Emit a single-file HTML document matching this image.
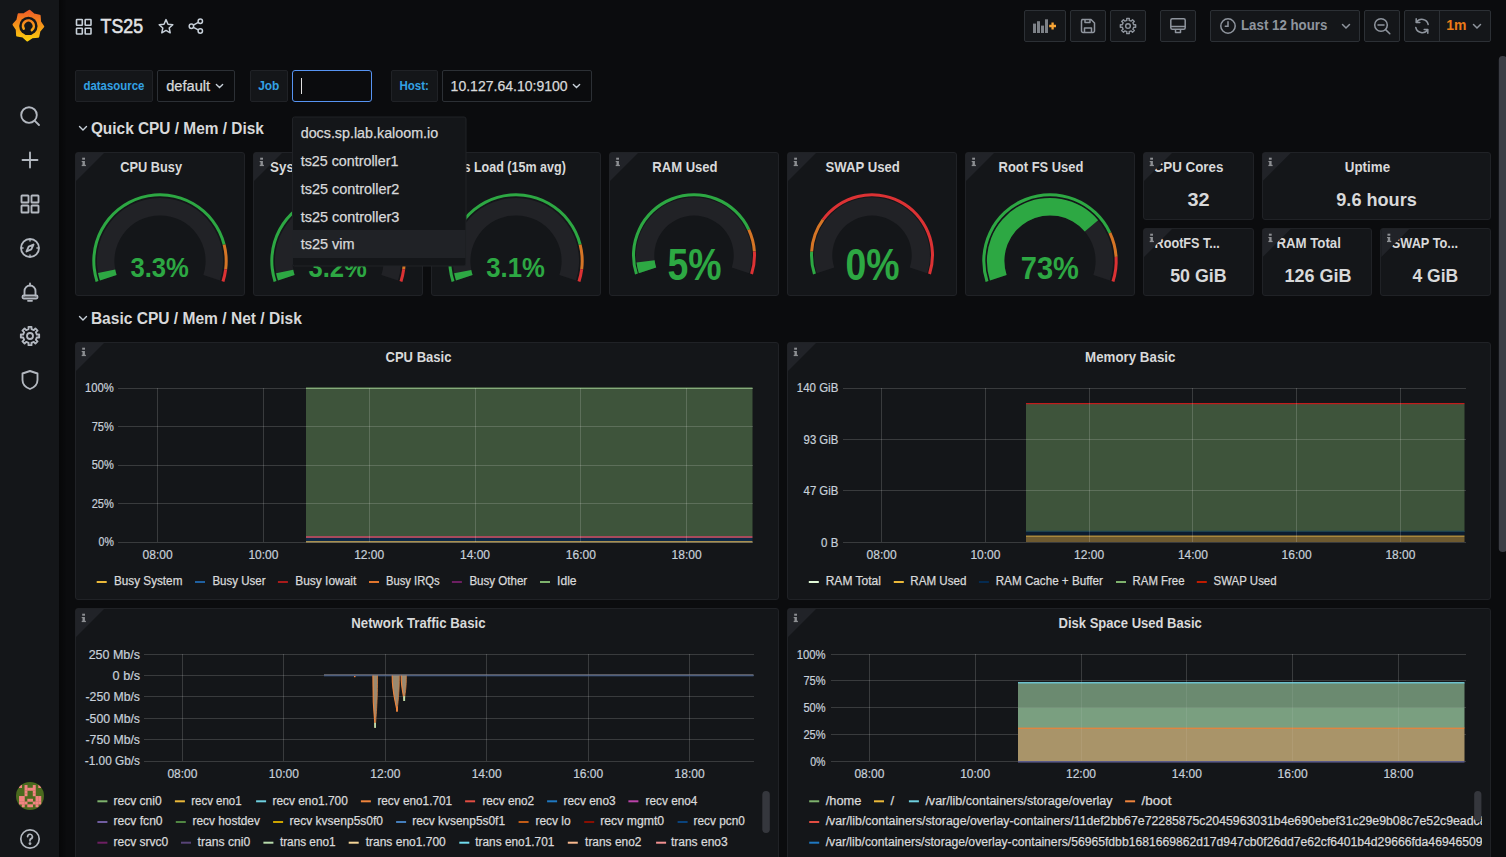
<!DOCTYPE html><html><head><meta charset="utf-8"><style>
*{margin:0;padding:0;box-sizing:border-box}
html,body{width:1506px;height:857px;overflow:hidden;background:#0b0c0e;font-family:"Liberation Sans", sans-serif;color:#d8d9da}
.a{position:absolute}
.panel{position:absolute;background:#141619;border:1px solid #202226;border-radius:3px}
.btn{position:absolute;top:10px;height:32px;background:#141619;border:1px solid #2c3035;border-radius:2px}
</style></head><body>
<div class="a" style="left:0;top:0;width:59px;height:857px;background:#141619"></div><div class="a" style="left:59px;top:0;width:8px;height:857px;background:linear-gradient(90deg,rgba(0,0,0,0.45),rgba(0,0,0,0))"></div><svg class="a" style="left:0;top:0" width="59" height="50" viewBox="0 0 59 50"><defs><linearGradient id="lg" gradientUnits="userSpaceOnUse" x1="0" y1="41" x2="0" y2="10"><stop offset="0" stop-color="#fcd10c"/><stop offset="1" stop-color="#f05a28"/></linearGradient></defs><path d="M29.43 10.84 L33.84 14.68 L39.57 15.89 L39.97 21.73 L43.16 26.63 L39.32 31.04 L38.11 36.77 L32.27 37.17 L27.37 40.36 L22.96 36.52 L17.23 35.31 L16.83 29.47 L13.64 24.57 L17.48 20.16 L18.69 14.43 L24.53 14.03 Z" fill="url(#lg)" stroke="url(#lg)" stroke-width="2.2" stroke-linejoin="round"/><circle cx="28.4" cy="25.900000000000002" r="9.2" fill="#141619"/><path d="M23.72 28.60 A5.4 5.4 0 1 1 31.87 30.04" fill="none" stroke="url(#lg)" stroke-width="2.6" stroke-linecap="round"/></svg><svg class="a" style="left:18px;top:104px" width="24" height="24" viewBox="0 0 24 24" fill="none" stroke="#b3b8c0" stroke-width="1.85" stroke-linecap="round" stroke-linejoin="round"><circle cx="11" cy="11" r="7.8"/><path d="M16.8 16.8 L21 21"/></svg><svg class="a" style="left:18px;top:148px" width="24" height="24" viewBox="0 0 24 24" fill="none" stroke="#b3b8c0" stroke-width="1.85" stroke-linecap="round" stroke-linejoin="round"><path d="M12 4.5 V19.5 M4.5 12 H19.5"/></svg><svg class="a" style="left:18px;top:192px" width="24" height="24" viewBox="0 0 24 24" fill="none" stroke="#b3b8c0" stroke-width="1.85" stroke-linecap="round" stroke-linejoin="round"><rect x="3.5" y="3.5" width="7" height="7" rx="0.6"/><rect x="13.5" y="3.5" width="7" height="7" rx="0.6"/><rect x="3.5" y="13.5" width="7" height="7" rx="0.6"/><rect x="13.5" y="13.5" width="7" height="7" rx="0.6"/></svg><svg class="a" style="left:18px;top:236px" width="24" height="24" viewBox="0 0 24 24" fill="none" stroke="#b3b8c0" stroke-width="1.85" stroke-linecap="round" stroke-linejoin="round"><circle cx="12" cy="12" r="9"/><path d="M15.5 8.5 L13.3 13.3 L8.5 15.5 L10.7 10.7 Z"/><path d="M12 3.5 v1.6 M12 18.9 v1.6 M3.5 12 h1.6 M18.9 12 h1.6" stroke-width="1.4"/></svg><svg class="a" style="left:18px;top:280px" width="24" height="24" viewBox="0 0 24 24" fill="none" stroke="#b3b8c0" stroke-width="1.85" stroke-linecap="round" stroke-linejoin="round"><path d="M6.5 15.5 V11 a5.5 5.5 0 0 1 11 0 V15.5"/><rect x="4.5" y="15.5" width="15" height="3" rx="1.2"/><path d="M10 20.8 h4"/><path d="M12 3.5 v2"/></svg><svg class="a" style="left:18px;top:324px" width="24" height="24" viewBox="0 0 24 24" fill="none" stroke="#b3b8c0" stroke-width="1.85" stroke-linecap="round" stroke-linejoin="round"><circle cx="12" cy="12" r="3"/><path d="M10.57 5.15 L10.47 2.83 L13.53 2.83 L13.43 5.15 L15.83 6.14 L17.41 4.43 L19.57 6.59 L17.86 8.17 L18.85 10.57 L21.17 10.47 L21.17 13.53 L18.85 13.43 L17.86 15.83 L19.57 17.41 L17.41 19.57 L15.83 17.86 L13.43 18.85 L13.53 21.17 L10.47 21.17 L10.57 18.85 L8.17 17.86 L6.59 19.57 L4.43 17.41 L6.14 15.83 L5.15 13.43 L2.83 13.53 L2.83 10.47 L5.15 10.57 L6.14 8.17 L4.43 6.59 L6.59 4.43 L8.17 6.14 Z"/></svg><svg class="a" style="left:18px;top:368px" width="24" height="24" viewBox="0 0 24 24" fill="none" stroke="#b3b8c0" stroke-width="1.85" stroke-linecap="round" stroke-linejoin="round"><path d="M12 3 L19.5 5.5 V12 C19.5 16.5 16 19.5 12 21 C8 19.5 4.5 16.5 4.5 12 V5.5 Z"/></svg><svg class="a" style="left:16px;top:782px" width="28" height="28" viewBox="0 0 28 28"><defs><clipPath id="avc"><circle cx="14" cy="14" r="14"/></clipPath></defs><g clip-path="url(#avc)"><rect width="28" height="28" fill="#4a6a1e"/><rect x="3.04" y="3.04" width="2.95" height="2.95" fill="#f28482"/><rect x="8.54" y="3.04" width="2.95" height="2.95" fill="#f28482"/><rect x="16.79" y="3.04" width="2.95" height="2.95" fill="#f28482"/><rect x="22.29" y="3.04" width="2.95" height="2.95" fill="#f28482"/><rect x="8.54" y="5.79" width="2.95" height="2.95" fill="#f28482"/><rect x="11.29" y="5.79" width="2.95" height="2.95" fill="#f28482"/><rect x="14.04" y="5.79" width="2.95" height="2.95" fill="#f28482"/><rect x="16.79" y="5.79" width="2.95" height="2.95" fill="#f28482"/><rect x="8.54" y="8.54" width="2.95" height="2.95" fill="#f28482"/><rect x="16.79" y="8.54" width="2.95" height="2.95" fill="#f28482"/><rect x="8.54" y="11.29" width="2.95" height="2.95" fill="#f28482"/><rect x="16.79" y="11.29" width="2.95" height="2.95" fill="#f28482"/><rect x="3.04" y="14.04" width="2.95" height="2.95" fill="#f28482"/><rect x="5.79" y="14.04" width="2.95" height="2.95" fill="#f28482"/><rect x="19.54" y="14.04" width="2.95" height="2.95" fill="#f28482"/><rect x="22.29" y="14.04" width="2.95" height="2.95" fill="#f28482"/><rect x="3.04" y="16.79" width="2.95" height="2.95" fill="#f28482"/><rect x="5.79" y="16.79" width="2.95" height="2.95" fill="#f28482"/><rect x="11.29" y="16.79" width="2.95" height="2.95" fill="#f28482"/><rect x="14.04" y="16.79" width="2.95" height="2.95" fill="#f28482"/><rect x="19.54" y="16.79" width="2.95" height="2.95" fill="#f28482"/><rect x="22.29" y="16.79" width="2.95" height="2.95" fill="#f28482"/><rect x="3.04" y="19.54" width="2.95" height="2.95" fill="#f28482"/><rect x="5.79" y="19.54" width="2.95" height="2.95" fill="#f28482"/><rect x="8.54" y="19.54" width="2.95" height="2.95" fill="#f28482"/><rect x="16.79" y="19.54" width="2.95" height="2.95" fill="#f28482"/><rect x="19.54" y="19.54" width="2.95" height="2.95" fill="#f28482"/><rect x="22.29" y="19.54" width="2.95" height="2.95" fill="#f28482"/><rect x="5.79" y="22.29" width="2.95" height="2.95" fill="#f28482"/><rect x="11.29" y="22.29" width="2.95" height="2.95" fill="#f28482"/><rect x="14.04" y="22.29" width="2.95" height="2.95" fill="#f28482"/><rect x="19.54" y="22.29" width="2.95" height="2.95" fill="#f28482"/></g></svg><svg class="a" style="left:19px;top:828px" width="22" height="22" viewBox="0 0 22 22" fill="none" stroke="#b3b8c0" stroke-width="1.7"><circle cx="11" cy="11" r="9.2"/><path d="M8.6 8.6 a2.4 2.4 0 1 1 3.2 2.3 c-0.6 0.2-0.8 0.6-0.8 1.3 v0.6" stroke-linecap="round"/><circle cx="11" cy="15.6" r="0.6" fill="#b3b8c0"/></svg><svg class="a" style="left:75px;top:18px" width="18" height="18" viewBox="0 0 18 18" fill="none" stroke="#c7d0d9" stroke-width="1.6"><rect x="1.5" y="1.5" width="5.8" height="5.8" rx="0.5"/><rect x="10.2" y="1.5" width="5.8" height="5.8" rx="0.5"/><rect x="1.5" y="10.2" width="5.8" height="5.8" rx="0.5"/><rect x="10.2" y="10.2" width="5.8" height="5.8" rx="0.5"/></svg><svg class="a" style="left:157px;top:18px" width="18" height="18" viewBox="0 0 18 18" fill="none" stroke="#c7d0d9" stroke-width="1.5" stroke-linejoin="round"><path d="M9 1.6 L11 6.2 L15.8 6.7 L12.2 10 L13.2 14.8 L9 12.4 L4.8 14.8 L5.8 10 L2.2 6.7 L7 6.2 Z"/></svg><svg class="a" style="left:187px;top:17px" width="18" height="18" viewBox="0 0 18 18" fill="none" stroke="#c7d0d9" stroke-width="1.5"><circle cx="13.3" cy="4.3" r="2.2"/><circle cx="4.4" cy="9.2" r="2.2"/><circle cx="13.3" cy="14" r="2.2"/><path d="M6.4 8.1 L11.3 5.4 M6.4 10.3 L11.3 12.9"/></svg><div class="btn" style="left:1024px;width:42px"></div><div class="btn" style="left:1070px;width:36px"></div><div class="btn" style="left:1110px;width:36px"></div><div class="btn" style="left:1160px;width:36px"></div><div class="btn" style="left:1210px;width:150px"></div><div class="btn" style="left:1364px;width:36px"></div><div class="btn" style="left:1404px;width:87px"></div><div class="a" style="left:1439px;top:10px;width:1px;height:32px;background:#2c3035"></div><svg class="a" style="left:1030px;top:16px" width="30" height="20" viewBox="0 0 30 20"><g fill="#7d8187"><rect x="3" y="7.6" width="3" height="9.4"/><rect x="7" y="5.2" width="3" height="11.8"/><rect x="11" y="9.6" width="3" height="7.4"/><rect x="15" y="3.3" width="3" height="13.7"/></g><path d="M22.6 6 V14 M18.6 10 H26.6" stroke="#141619" stroke-width="4.6"/><path d="M22.6 6.6 V13.4 M19.2 10 H26" stroke="#f7a536" stroke-width="2.3"/></svg><svg class="a" style="left:1079px;top:17px" width="18" height="18" viewBox="0 0 18 18" fill="none" stroke="#8f959e" stroke-width="1.5" stroke-linejoin="round"><path d="M3 2.5 H12 L15.5 6 V14 a1.5 1.5 0 0 1 -1.5 1.5 H4 a1.5 1.5 0 0 1 -1.5 -1.5 V4 a1.5 1.5 0 0 1 1.5 -1.5 Z"/><path d="M6 2.5 V5.5 H11 V2.5"/><path d="M5.5 15.5 V11 H12.5 V15.5"/></svg><svg class="a" style="left:1118px;top:16px" width="20" height="20" viewBox="0 0 24 24" fill="none" stroke="#8f959e" stroke-width="1.7" stroke-linejoin="round"><circle cx="12" cy="12" r="2.8"/><path d="M10.57 5.15 L10.47 2.83 L13.53 2.83 L13.43 5.15 L15.83 6.14 L17.41 4.43 L19.57 6.59 L17.86 8.17 L18.85 10.57 L21.17 10.47 L21.17 13.53 L18.85 13.43 L17.86 15.83 L19.57 17.41 L17.41 19.57 L15.83 17.86 L13.43 18.85 L13.53 21.17 L10.47 21.17 L10.57 18.85 L8.17 17.86 L6.59 19.57 L4.43 17.41 L6.14 15.83 L5.15 13.43 L2.83 13.53 L2.83 10.47 L5.15 10.57 L6.14 8.17 L4.43 6.59 L6.59 4.43 L8.17 6.14 Z"/></svg><svg class="a" style="left:1169px;top:17px" width="18" height="18" viewBox="0 0 18 18" fill="none" stroke="#8f959e" stroke-width="1.5" stroke-linejoin="round"><rect x="1.8" y="1.8" width="14.4" height="10.5" rx="1.5"/><path d="M1.8 9.5 H16.2"/><path d="M6.5 12.3 V15.5 H11.5 V12.3"/></svg><svg class="a" style="left:1219px;top:17px" width="18" height="18" viewBox="0 0 18 18" fill="none" stroke="#8f959e" stroke-width="1.5" stroke-linecap="round"><circle cx="9" cy="9" r="7.2"/><path d="M9 4.8 V9.3 H6.3"/></svg><svg class="a" style="left:1341px;top:23px" width="10" height="7.0" viewBox="0 0 10 7" fill="none" stroke="#8f959e" stroke-width="1.5" stroke-linecap="round"><path d="M1.5 1.5 L5 5 L8.5 1.5"/></svg><svg class="a" style="left:1373px;top:17px" width="19" height="19" viewBox="0 0 19 19" fill="none" stroke="#8f959e" stroke-width="1.5" stroke-linecap="round"><circle cx="8" cy="8" r="6.3"/><path d="M12.6 12.6 L16.8 16.8 M5 8 H11"/></svg><svg class="a" style="left:1413px;top:17px" width="18" height="18" viewBox="0 0 18 18" fill="none" stroke="#8f959e" stroke-width="1.5" stroke-linecap="round" stroke-linejoin="round"><path d="M15.2 7.5 A6.5 6.5 0 0 0 3.5 5.2 M2.8 10.5 A6.5 6.5 0 0 0 14.5 12.8"/><path d="M3.2 1.8 V5.5 H6.8 M14.8 16.2 V12.5 H11.2"/></svg><svg class="a" style="left:1472px;top:23px" width="10" height="7.0" viewBox="0 0 10 7" fill="none" stroke="#8f959e" stroke-width="1.5" stroke-linecap="round"><path d="M1.5 1.5 L5 5 L8.5 1.5"/></svg><div class="a" style="left:75px;top:70px;width:78px;height:32px;background:#141619;border:1px solid #202226;border-radius:2px"></div><div class="a" style="left:157px;top:70px;width:78px;height:32px;background:#0b0c0e;border:1px solid #2c3035;border-radius:2px"></div><svg class="a" style="left:215px;top:83px" width="9" height="6.5" viewBox="0 0 10 7" fill="none" stroke="#c7d0d9" stroke-width="1.5" stroke-linecap="round"><path d="M1.5 1.5 L5 5 L8.5 1.5"/></svg><div class="a" style="left:250px;top:70px;width:38px;height:32px;background:#141619;border:1px solid #202226;border-radius:2px"></div><div class="a" style="left:292px;top:70px;width:80px;height:32px;background:#0b0c0e;border:1px solid #5794f2;border-radius:3px"></div><div class="a" style="left:301px;top:78px;width:1px;height:16px;background:#e0e0e0"></div><div class="a" style="left:391px;top:70px;width:47px;height:32px;background:#141619;border:1px solid #202226;border-radius:2px"></div><div class="a" style="left:442px;top:70px;width:150px;height:32px;background:#0b0c0e;border:1px solid #2c3035;border-radius:2px"></div><svg class="a" style="left:572px;top:83px" width="9" height="6.5" viewBox="0 0 10 7" fill="none" stroke="#c7d0d9" stroke-width="1.5" stroke-linecap="round"><path d="M1.5 1.5 L5 5 L8.5 1.5"/></svg><svg class="a" style="left:78px;top:125.3px" width="10" height="7" viewBox="0 0 10 7" fill="none" stroke="#c7d0d9" stroke-width="1.4" stroke-linecap="round"><path d="M1.5 1.5 L5 5 L8.5 1.5"/></svg><svg class="a" style="left:78px;top:315.3px" width="10" height="7" viewBox="0 0 10 7" fill="none" stroke="#c7d0d9" stroke-width="1.4" stroke-linecap="round"><path d="M1.5 1.5 L5 5 L8.5 1.5"/></svg><div class="panel" style="left:75.0px;top:152px;width:170.0px;height:144px"></div><div class="panel" style="left:253.0px;top:152px;width:170.0px;height:144px"></div><div class="panel" style="left:431.0px;top:152px;width:170.0px;height:144px"></div><div class="panel" style="left:609.0px;top:152px;width:170.0px;height:144px"></div><div class="panel" style="left:787.0px;top:152px;width:170.0px;height:144px"></div><div class="panel" style="left:965.0px;top:152px;width:170.0px;height:144px"></div><div class="panel" style="left:1143.0px;top:152px;width:110.66666666666674px;height:68px"></div><div class="panel" style="left:1261.6666666666667px;top:152px;width:229.33333333333326px;height:68px"></div><div class="panel" style="left:1143.0px;top:228px;width:110.66666666666674px;height:68px"></div><div class="panel" style="left:1261.6666666666667px;top:228px;width:110.66666666666674px;height:68px"></div><div class="panel" style="left:1380.3333333333335px;top:228px;width:110.66666666666674px;height:68px"></div><div class="panel" style="left:75px;top:342px;width:704px;height:258px"></div><div class="panel" style="left:787px;top:342px;width:704px;height:258px"></div><div class="panel" style="left:75px;top:608px;width:704px;height:272px"></div><div class="panel" style="left:787px;top:608px;width:704px;height:272px"></div>
<svg class="a" style="left:0;top:0" width="1506" height="857" font-family="Liberation Sans, sans-serif"><text x="100.6" y="33.2" font-size="19.5" fill="#e2e4e6" stroke="#e2e4e6" stroke-width="0.55" textLength="42.4" lengthAdjust="spacingAndGlyphs">TS25</text><text x="1241.0" y="30.0" font-size="14" fill="#8f959e" font-weight="bold" textLength="86.4" lengthAdjust="spacingAndGlyphs">Last 12 hours</text><text x="1446.2" y="30.0" font-size="14" fill="#eb7b18" font-weight="bold" textLength="20.2" lengthAdjust="spacingAndGlyphs">1m</text><text x="83.5" y="90.3" font-size="12" fill="#33a2e5" font-weight="bold" textLength="60.9" lengthAdjust="spacingAndGlyphs">datasource</text><text x="166.2" y="90.5" font-size="14" fill="#d8d9da" stroke="#d8d9da" stroke-width="0.25" textLength="44.0" lengthAdjust="spacingAndGlyphs">default</text><text x="258.2" y="90.3" font-size="12" fill="#33a2e5" font-weight="bold" textLength="21.2" lengthAdjust="spacingAndGlyphs">Job</text><text x="399.5" y="90.3" font-size="12" fill="#33a2e5" font-weight="bold" textLength="29.4" lengthAdjust="spacingAndGlyphs">Host:</text><text x="450.6" y="90.5" font-size="14" fill="#d8d9da" stroke="#d8d9da" stroke-width="0.25" textLength="117.0" lengthAdjust="spacingAndGlyphs">10.127.64.10:9100</text><text x="90.9" y="133.8" font-size="16" fill="#d8d9da" font-weight="bold" textLength="172.9" lengthAdjust="spacingAndGlyphs">Quick CPU / Mem / Disk</text><text x="90.9" y="323.8" font-size="16" fill="#d8d9da" font-weight="bold" textLength="210.9" lengthAdjust="spacingAndGlyphs">Basic CPU / Mem / Net / Disk</text><text x="120.2" y="171.8" font-size="14" fill="#d8d9da" font-weight="bold" textLength="61.9" lengthAdjust="spacingAndGlyphs">CPU Busy</text><path d="M95.61 281.92 A67.7 67.7 0 1 1 225.57 244.16 L222.67 244.91 A64.7 64.7 0 1 0 98.47 280.99 Z" fill="#2da843"/><path d="M225.57 244.16 A67.7 67.7 0 0 1 227.17 269.49 L224.19 269.11 A64.7 64.7 0 0 0 222.67 244.91 Z" fill="#d57526"/><path d="M227.17 269.49 A67.7 67.7 0 0 1 224.39 281.92 L221.53 280.99 A64.7 64.7 0 0 0 224.19 269.11 Z" fill="#dc3234"/><path d="M99.99 280.50 A63.1 63.1 0 1 1 220.01 280.50 L203.37 275.09 A45.6 45.6 0 1 0 116.63 275.09 Z" fill="#212226"/><path d="M99.99 280.50 A63.1 63.1 0 0 1 98.03 272.90 L115.22 269.60 A45.6 45.6 0 0 0 116.63 275.09 Z" fill="#2da843"/><text x="130.4" y="276.5" font-size="27.5" fill="#2da843" textLength="58.4" lengthAdjust="spacingAndGlyphs" font-weight="bold">3.3%</text><text x="270.1" y="171.8" font-size="14" fill="#d8d9da" font-weight="bold" textLength="117.8" lengthAdjust="spacingAndGlyphs">Sys Load (5m avg)</text><path d="M273.61 281.92 A67.7 67.7 0 1 1 403.57 244.16 L400.67 244.91 A64.7 64.7 0 1 0 276.47 280.99 Z" fill="#2da843"/><path d="M403.57 244.16 A67.7 67.7 0 0 1 405.17 269.49 L402.19 269.11 A64.7 64.7 0 0 0 400.67 244.91 Z" fill="#d57526"/><path d="M405.17 269.49 A67.7 67.7 0 0 1 402.39 281.92 L399.53 280.99 A64.7 64.7 0 0 0 402.19 269.11 Z" fill="#dc3234"/><path d="M277.99 280.50 A63.1 63.1 0 1 1 398.01 280.50 L381.37 275.09 A45.6 45.6 0 1 0 294.63 275.09 Z" fill="#212226"/><path d="M277.99 280.50 A63.1 63.1 0 0 1 276.08 273.14 L293.25 269.77 A45.6 45.6 0 0 0 294.63 275.09 Z" fill="#2da843"/><text x="308.4" y="276.5" font-size="27.5" fill="#2da843" textLength="58.4" lengthAdjust="spacingAndGlyphs" font-weight="bold">3.2%</text><text x="448.1" y="171.8" font-size="14" fill="#d8d9da" font-weight="bold" textLength="117.8" lengthAdjust="spacingAndGlyphs">Sys Load (15m avg)</text><path d="M451.61 281.92 A67.7 67.7 0 1 1 581.57 244.16 L578.67 244.91 A64.7 64.7 0 1 0 454.47 280.99 Z" fill="#2da843"/><path d="M581.57 244.16 A67.7 67.7 0 0 1 583.17 269.49 L580.19 269.11 A64.7 64.7 0 0 0 578.67 244.91 Z" fill="#d57526"/><path d="M583.17 269.49 A67.7 67.7 0 0 1 580.39 281.92 L577.53 280.99 A64.7 64.7 0 0 0 580.19 269.11 Z" fill="#dc3234"/><path d="M455.99 280.50 A63.1 63.1 0 1 1 576.01 280.50 L559.37 275.09 A45.6 45.6 0 1 0 472.63 275.09 Z" fill="#212226"/><path d="M455.99 280.50 A63.1 63.1 0 0 1 454.12 273.37 L471.28 269.94 A45.6 45.6 0 0 0 472.63 275.09 Z" fill="#2da843"/><text x="486.3" y="276.5" font-size="27.5" fill="#2da843" textLength="58.6" lengthAdjust="spacingAndGlyphs" font-weight="bold">3.1%</text><text x="652.3" y="171.8" font-size="14" fill="#d8d9da" font-weight="bold" textLength="65.3" lengthAdjust="spacingAndGlyphs">RAM Used</text><path d="M635.03 274.46 A62 62 0 0 1 750.10 228.90 L747.38 230.18 A59 59 0 0 0 637.89 273.53 Z" fill="#2da843"/><path d="M750.10 228.90 A62 62 0 0 1 755.88 251.41 L752.88 251.60 A59 59 0 0 0 747.38 230.18 Z" fill="#d57526"/><path d="M755.88 251.41 A62 62 0 0 1 752.97 274.46 L750.11 273.53 A59 59 0 0 0 752.88 251.60 Z" fill="#dc3234"/><path d="M638.84 273.22 A58 58 0 1 1 749.16 273.22 L731.76 267.57 A39.7 39.7 0 1 0 656.24 267.57 Z" fill="#212226"/><path d="M638.84 273.22 A58 58 0 0 1 636.46 262.57 L654.61 260.28 A39.7 39.7 0 0 0 656.24 267.57 Z" fill="#2da843"/><text x="667.5" y="280.0" font-size="44" fill="#2da843" textLength="54.1" lengthAdjust="spacingAndGlyphs" font-weight="bold">5%</text><text x="825.5" y="171.8" font-size="14" fill="#d8d9da" font-weight="bold" textLength="74.3" lengthAdjust="spacingAndGlyphs">SWAP Used</text><path d="M813.03 274.46 A62 62 0 0 1 810.12 251.41 L813.12 251.60 A59 59 0 0 0 815.89 273.53 Z" fill="#2da843"/><path d="M810.12 251.41 A62 62 0 0 1 821.84 218.86 L824.27 220.62 A59 59 0 0 0 813.12 251.60 Z" fill="#d57526"/><path d="M821.84 218.86 A62 62 0 0 1 930.97 274.46 L928.11 273.53 A59 59 0 0 0 824.27 220.62 Z" fill="#dc3234"/><path d="M816.84 273.22 A58 58 0 1 1 927.16 273.22 L909.76 267.57 A39.7 39.7 0 1 0 834.24 267.57 Z" fill="#212226"/><text x="845.5" y="280.0" font-size="44" fill="#2da843" textLength="54.1" lengthAdjust="spacingAndGlyphs" font-weight="bold">0%</text><text x="998.6" y="171.8" font-size="14" fill="#d8d9da" font-weight="bold" textLength="84.8" lengthAdjust="spacingAndGlyphs">Root FS Used</text><path d="M985.61 281.92 A67.7 67.7 0 0 1 1111.26 232.17 L1108.54 233.45 A64.7 64.7 0 0 0 988.47 280.99 Z" fill="#2da843"/><path d="M1111.26 232.17 A67.7 67.7 0 0 1 1117.57 256.75 L1114.57 256.94 A64.7 64.7 0 0 0 1108.54 233.45 Z" fill="#d57526"/><path d="M1117.57 256.75 A67.7 67.7 0 0 1 1114.39 281.92 L1111.53 280.99 A64.7 64.7 0 0 0 1114.57 256.94 Z" fill="#dc3234"/><path d="M989.99 280.50 A63.1 63.1 0 1 1 1110.01 280.50 L1093.37 275.09 A45.6 45.6 0 1 0 1006.63 275.09 Z" fill="#212226"/><path d="M989.99 280.50 A63.1 63.1 0 0 1 1098.11 220.17 L1084.77 231.49 A45.6 45.6 0 0 0 1006.63 275.09 Z" fill="#2da843"/><text x="1020.8" y="279.0" font-size="32" fill="#2da843" textLength="58.1" lengthAdjust="spacingAndGlyphs" font-weight="bold">73%</text><text x="1153.6" y="171.9" font-size="14" fill="#d8d9da" font-weight="bold" textLength="69.8" lengthAdjust="spacingAndGlyphs">CPU Cores</text><text x="1187.5" y="205.9" font-size="19" fill="#d8d9da" font-weight="bold" textLength="22.1" lengthAdjust="spacingAndGlyphs">32</text><text x="1344.8" y="171.9" font-size="14" fill="#d8d9da" font-weight="bold" textLength="45.3" lengthAdjust="spacingAndGlyphs">Uptime</text><text x="1336.3" y="205.9" font-size="19" fill="#d8d9da" font-weight="bold" textLength="80.5" lengthAdjust="spacingAndGlyphs">9.6 hours</text><text x="1154.6" y="247.9" font-size="14" fill="#d8d9da" font-weight="bold" textLength="65.2" lengthAdjust="spacingAndGlyphs">RootFS T...</text><text x="1170.2" y="281.9" font-size="19" fill="#d8d9da" font-weight="bold" textLength="56.4" lengthAdjust="spacingAndGlyphs">50 GiB</text><text x="1276.4" y="247.9" font-size="14" fill="#d8d9da" font-weight="bold" textLength="64.5" lengthAdjust="spacingAndGlyphs">RAM Total</text><text x="1284.4" y="281.9" font-size="19" fill="#d8d9da" font-weight="bold" textLength="67.0" lengthAdjust="spacingAndGlyphs">126 GiB</text><text x="1391.8" y="247.9" font-size="14" fill="#d8d9da" font-weight="bold" textLength="66.2" lengthAdjust="spacingAndGlyphs">SWAP To...</text><text x="1412.5" y="281.9" font-size="19" fill="#d8d9da" font-weight="bold" textLength="45.7" lengthAdjust="spacingAndGlyphs">4 GiB</text><text x="385.5" y="361.9" font-size="14" fill="#d8d9da" font-weight="bold" textLength="65.9" lengthAdjust="spacingAndGlyphs">CPU Basic</text><rect x="306" y="388" width="446.5" height="148" fill="#3e543b"/><rect x="306" y="387.5" width="446.5" height="1.5" fill="#6f9a62"/><rect x="306" y="536" width="446.5" height="2" fill="#a84a5c"/><rect x="306" y="538" width="446.5" height="3" fill="#0f2a48"/><rect x="306" y="541" width="446.5" height="1.5" fill="#a89050"/><rect x="118" y="388" width="635" height="1" fill="rgba(255,255,255,0.16)"/><rect x="118" y="426" width="635" height="1" fill="rgba(255,255,255,0.16)"/><rect x="118" y="465" width="635" height="1" fill="rgba(255,255,255,0.16)"/><rect x="118" y="503" width="635" height="1" fill="rgba(255,255,255,0.16)"/><rect x="118" y="542" width="635" height="1" fill="rgba(255,255,255,0.16)"/><rect x="157" y="388" width="1" height="154" fill="rgba(255,255,255,0.16)"/><rect x="263" y="388" width="1" height="154" fill="rgba(255,255,255,0.16)"/><rect x="369" y="388" width="1" height="154" fill="rgba(255,255,255,0.16)"/><rect x="475" y="388" width="1" height="154" fill="rgba(255,255,255,0.16)"/><rect x="580" y="388" width="1" height="154" fill="rgba(255,255,255,0.16)"/><rect x="686" y="388" width="1" height="154" fill="rgba(255,255,255,0.16)"/><text x="85.0" y="392.3" font-size="12" fill="#c7d0d9" stroke="#c7d0d9" stroke-width="0.2" textLength="28.8" lengthAdjust="spacingAndGlyphs">100%</text><text x="91.7" y="430.8" font-size="12" fill="#c7d0d9" stroke="#c7d0d9" stroke-width="0.2" textLength="22.1" lengthAdjust="spacingAndGlyphs">75%</text><text x="91.7" y="469.3" font-size="12" fill="#c7d0d9" stroke="#c7d0d9" stroke-width="0.2" textLength="22.1" lengthAdjust="spacingAndGlyphs">50%</text><text x="91.7" y="507.8" font-size="12" fill="#c7d0d9" stroke="#c7d0d9" stroke-width="0.2" textLength="22.1" lengthAdjust="spacingAndGlyphs">25%</text><text x="98.5" y="546.3" font-size="12" fill="#c7d0d9" stroke="#c7d0d9" stroke-width="0.2" textLength="15.3" lengthAdjust="spacingAndGlyphs">0%</text><text x="157.6" y="558.8" font-size="12" fill="#c7d0d9" stroke="#c7d0d9" stroke-width="0.2" text-anchor="middle">08:00</text><text x="263.4" y="558.8" font-size="12" fill="#c7d0d9" stroke="#c7d0d9" stroke-width="0.2" text-anchor="middle">10:00</text><text x="369.2" y="558.8" font-size="12" fill="#c7d0d9" stroke="#c7d0d9" stroke-width="0.2" text-anchor="middle">12:00</text><text x="475.0" y="558.8" font-size="12" fill="#c7d0d9" stroke="#c7d0d9" stroke-width="0.2" text-anchor="middle">14:00</text><text x="580.8" y="558.8" font-size="12" fill="#c7d0d9" stroke="#c7d0d9" stroke-width="0.2" text-anchor="middle">16:00</text><text x="686.6" y="558.8" font-size="12" fill="#c7d0d9" stroke="#c7d0d9" stroke-width="0.2" text-anchor="middle">18:00</text><rect x="96.7" y="581.0" width="10" height="2" fill="#EAB839"/><text x="114.0" y="585.3" font-size="12" fill="#d8d9da" stroke="#d8d9da" stroke-width="0.25" textLength="68.4" lengthAdjust="spacingAndGlyphs">Busy System</text><rect x="195.0" y="581.0" width="10" height="2" fill="#1F60A0"/><text x="212.4" y="585.3" font-size="12" fill="#d8d9da" stroke="#d8d9da" stroke-width="0.25" textLength="53.1" lengthAdjust="spacingAndGlyphs">Busy User</text><rect x="277.9" y="581.0" width="10" height="2" fill="#A81B1B"/><text x="295.2" y="585.3" font-size="12" fill="#d8d9da" stroke="#d8d9da" stroke-width="0.25" textLength="61.1" lengthAdjust="spacingAndGlyphs">Busy Iowait</text><rect x="369.0" y="581.0" width="10" height="2" fill="#E0752D"/><text x="385.9" y="585.3" font-size="12" fill="#d8d9da" stroke="#d8d9da" stroke-width="0.25" textLength="53.8" lengthAdjust="spacingAndGlyphs">Busy IRQs</text><rect x="451.9" y="581.0" width="10" height="2" fill="#6D1F62"/><text x="469.4" y="585.3" font-size="12" fill="#d8d9da" stroke="#d8d9da" stroke-width="0.25" textLength="57.8" lengthAdjust="spacingAndGlyphs">Busy Other</text><rect x="540.0" y="581.0" width="10" height="2" fill="#7EB26D"/><text x="557.1" y="585.3" font-size="12" fill="#d8d9da" stroke="#d8d9da" stroke-width="0.25" textLength="19.5" lengthAdjust="spacingAndGlyphs">Idle</text><text x="1085.1" y="361.7" font-size="14" fill="#d8d9da" font-weight="bold" textLength="90.3" lengthAdjust="spacingAndGlyphs">Memory Basic</text><rect x="1026" y="404" width="438.5" height="128" fill="#3e543b"/><rect x="1026" y="403" width="438.5" height="1.2" fill="#c21b1b"/><rect x="1026" y="530.8" width="438.5" height="1" fill="#1d4a5e"/><rect x="1026" y="531.8" width="438.5" height="3.7" fill="#0c1c30"/><rect x="1026" y="535.5" width="438.5" height="1.5" fill="#a8873d"/><rect x="1026" y="537" width="438.5" height="5" fill="#6e5a30"/><rect x="843" y="388" width="623" height="1" fill="rgba(255,255,255,0.16)"/><rect x="843" y="439" width="623" height="1" fill="rgba(255,255,255,0.16)"/><rect x="843" y="490" width="623" height="1" fill="rgba(255,255,255,0.16)"/><rect x="843" y="542" width="623" height="1" fill="rgba(255,255,255,0.16)"/><rect x="881" y="388" width="1" height="154" fill="rgba(255,255,255,0.16)"/><rect x="985" y="388" width="1" height="154" fill="rgba(255,255,255,0.16)"/><rect x="1089" y="388" width="1" height="154" fill="rgba(255,255,255,0.16)"/><rect x="1192" y="388" width="1" height="154" fill="rgba(255,255,255,0.16)"/><rect x="1296" y="388" width="1" height="154" fill="rgba(255,255,255,0.16)"/><rect x="1400" y="388" width="1" height="154" fill="rgba(255,255,255,0.16)"/><text x="796.8" y="392.3" font-size="12" fill="#c7d0d9" stroke="#c7d0d9" stroke-width="0.2" textLength="41.5" lengthAdjust="spacingAndGlyphs">140 GiB</text><text x="803.6" y="443.6" font-size="12" fill="#c7d0d9" stroke="#c7d0d9" stroke-width="0.2" textLength="34.7" lengthAdjust="spacingAndGlyphs">93 GiB</text><text x="803.6" y="494.9" font-size="12" fill="#c7d0d9" stroke="#c7d0d9" stroke-width="0.2" textLength="34.7" lengthAdjust="spacingAndGlyphs">47 GiB</text><text x="821.1" y="546.5" font-size="12" fill="#c7d0d9" stroke="#c7d0d9" stroke-width="0.2" textLength="17.2" lengthAdjust="spacingAndGlyphs">0 B</text><text x="881.6" y="558.8" font-size="12" fill="#c7d0d9" stroke="#c7d0d9" stroke-width="0.2" text-anchor="middle">08:00</text><text x="985.4" y="558.8" font-size="12" fill="#c7d0d9" stroke="#c7d0d9" stroke-width="0.2" text-anchor="middle">10:00</text><text x="1089.1" y="558.8" font-size="12" fill="#c7d0d9" stroke="#c7d0d9" stroke-width="0.2" text-anchor="middle">12:00</text><text x="1192.9" y="558.8" font-size="12" fill="#c7d0d9" stroke="#c7d0d9" stroke-width="0.2" text-anchor="middle">14:00</text><text x="1296.6" y="558.8" font-size="12" fill="#c7d0d9" stroke="#c7d0d9" stroke-width="0.2" text-anchor="middle">16:00</text><text x="1400.4" y="558.8" font-size="12" fill="#c7d0d9" stroke="#c7d0d9" stroke-width="0.2" text-anchor="middle">18:00</text><rect x="808.8" y="581.0" width="10" height="2" fill="#E0F9D7"/><text x="825.7" y="585.3" font-size="12" fill="#d8d9da" stroke="#d8d9da" stroke-width="0.25" textLength="55.2" lengthAdjust="spacingAndGlyphs">RAM Total</text><rect x="893.8" y="581.0" width="10" height="2" fill="#EAB839"/><text x="910.3" y="585.3" font-size="12" fill="#d8d9da" stroke="#d8d9da" stroke-width="0.25" textLength="56.1" lengthAdjust="spacingAndGlyphs">RAM Used</text><rect x="978.9" y="581.0" width="10" height="2" fill="#052B51"/><text x="995.7" y="585.3" font-size="12" fill="#d8d9da" stroke="#d8d9da" stroke-width="0.25" textLength="107.2" lengthAdjust="spacingAndGlyphs">RAM Cache + Buffer</text><rect x="1116.0" y="581.0" width="10" height="2" fill="#7EB26D"/><text x="1132.5" y="585.3" font-size="12" fill="#d8d9da" stroke="#d8d9da" stroke-width="0.25" textLength="52.1" lengthAdjust="spacingAndGlyphs">RAM Free</text><rect x="1196.8" y="581.0" width="10" height="2" fill="#BF1B00"/><text x="1213.6" y="585.3" font-size="12" fill="#d8d9da" stroke="#d8d9da" stroke-width="0.25" textLength="63.0" lengthAdjust="spacingAndGlyphs">SWAP Used</text><text x="351.3" y="627.5" font-size="14" fill="#d8d9da" font-weight="bold" textLength="134.2" lengthAdjust="spacingAndGlyphs">Network Traffic Basic</text><rect x="144" y="654" width="610" height="1" fill="rgba(255,255,255,0.16)"/><rect x="144" y="675" width="610" height="1" fill="rgba(255,255,255,0.16)"/><rect x="144" y="696" width="610" height="1" fill="rgba(255,255,255,0.16)"/><rect x="144" y="718" width="610" height="1" fill="rgba(255,255,255,0.16)"/><rect x="144" y="739" width="610" height="1" fill="rgba(255,255,255,0.16)"/><rect x="144" y="761" width="610" height="1" fill="rgba(255,255,255,0.16)"/><rect x="182" y="654" width="1" height="107" fill="rgba(255,255,255,0.16)"/><rect x="283" y="654" width="1" height="107" fill="rgba(255,255,255,0.16)"/><rect x="385" y="654" width="1" height="107" fill="rgba(255,255,255,0.16)"/><rect x="486" y="654" width="1" height="107" fill="rgba(255,255,255,0.16)"/><rect x="588" y="654" width="1" height="107" fill="rgba(255,255,255,0.16)"/><rect x="689" y="654" width="1" height="107" fill="rgba(255,255,255,0.16)"/><text x="88.7" y="658.5" font-size="12" fill="#c7d0d9" stroke="#c7d0d9" stroke-width="0.2" textLength="51.3" lengthAdjust="spacingAndGlyphs">250 Mb/s</text><text x="112.6" y="679.5" font-size="12" fill="#c7d0d9" stroke="#c7d0d9" stroke-width="0.2" textLength="27.4" lengthAdjust="spacingAndGlyphs">0 b/s</text><text x="85.5" y="700.5" font-size="12" fill="#c7d0d9" stroke="#c7d0d9" stroke-width="0.2" textLength="54.5" lengthAdjust="spacingAndGlyphs">-250 Mb/s</text><text x="85.5" y="722.5" font-size="12" fill="#c7d0d9" stroke="#c7d0d9" stroke-width="0.2" textLength="54.5" lengthAdjust="spacingAndGlyphs">-500 Mb/s</text><text x="85.5" y="744.0" font-size="12" fill="#c7d0d9" stroke="#c7d0d9" stroke-width="0.2" textLength="54.5" lengthAdjust="spacingAndGlyphs">-750 Mb/s</text><text x="84.8" y="765.4" font-size="12" fill="#c7d0d9" stroke="#c7d0d9" stroke-width="0.2" textLength="55.2" lengthAdjust="spacingAndGlyphs">-1.00 Gb/s</text><text x="182.4" y="778.4" font-size="12" fill="#c7d0d9" stroke="#c7d0d9" stroke-width="0.2" text-anchor="middle">08:00</text><text x="283.8" y="778.4" font-size="12" fill="#c7d0d9" stroke="#c7d0d9" stroke-width="0.2" text-anchor="middle">10:00</text><text x="385.3" y="778.4" font-size="12" fill="#c7d0d9" stroke="#c7d0d9" stroke-width="0.2" text-anchor="middle">12:00</text><text x="486.7" y="778.4" font-size="12" fill="#c7d0d9" stroke="#c7d0d9" stroke-width="0.2" text-anchor="middle">14:00</text><text x="588.2" y="778.4" font-size="12" fill="#c7d0d9" stroke="#c7d0d9" stroke-width="0.2" text-anchor="middle">16:00</text><text x="689.6" y="778.4" font-size="12" fill="#c7d0d9" stroke="#c7d0d9" stroke-width="0.2" text-anchor="middle">18:00</text><rect x="324" y="674.4" width="429.5" height="1.2" fill="#8c8a92"/><rect x="324" y="675.4" width="429.5" height="0.9" fill="#3a5688"/><rect x="354" y="676" width="1.5" height="1.2" fill="#EF843C"/><path d="M372.9 675.5 C372.59999999999997 699.0 374.5 721.8 375.1 727.8 C375.70000000000005 721.8 377.8 699.0 377.5 675.5 Z" fill="#a8967a" fill-opacity="0.9"/><path d="M372.9 675.5 C372.59999999999997 699.0 374.5 721.8 375.1 727.8" fill="none" stroke="#EF843C" stroke-width="1.1"/><path d="M377.5 675.5 C377.8 699.0 375.70000000000005 721.8 375.1 727.8" fill="none" stroke="#d88040" stroke-width="0.8"/><rect x="374.20000000000005" y="722.8" width="1.8" height="5" fill="#B7DBAB"/><path d="M392.2 675.5 C391.9 691.7 396.4 705.5 397 711.5 C397.6 705.5 399.6 691.7 399.3 675.5 Z" fill="#a8967a" fill-opacity="0.9"/><path d="M392.2 675.5 C391.9 691.7 396.4 705.5 397 711.5" fill="none" stroke="#EF843C" stroke-width="1.1"/><path d="M399.3 675.5 C399.6 691.7 397.6 705.5 397 711.5" fill="none" stroke="#d88040" stroke-width="0.8"/><rect x="396.1" y="706.5" width="1.8" height="5" fill="#EF843C"/><path d="M401.2 675.5 C400.9 687.0 403.59999999999997 695.0 404.2 701 C404.8 695.0 406.6 687.0 406.3 675.5 Z" fill="#a8967a" fill-opacity="0.9"/><path d="M401.2 675.5 C400.9 687.0 403.59999999999997 695.0 404.2 701" fill="none" stroke="#EF843C" stroke-width="1.1"/><path d="M406.3 675.5 C406.6 687.0 404.8 695.0 404.2 701" fill="none" stroke="#d88040" stroke-width="0.8"/><rect x="403.3" y="696" width="1.8" height="5" fill="#B7DBAB"/><rect x="97.4" y="800.3" width="10" height="2" fill="#7EB26D"/><text x="113.5" y="804.6" font-size="12" fill="#d8d9da" stroke="#d8d9da" stroke-width="0.25" textLength="48.2" lengthAdjust="spacingAndGlyphs">recv cni0</text><rect x="174.9" y="800.3" width="10" height="2" fill="#EAB839"/><text x="191.2" y="804.6" font-size="12" fill="#d8d9da" stroke="#d8d9da" stroke-width="0.25" textLength="50.4" lengthAdjust="spacingAndGlyphs">recv eno1</text><rect x="256.1" y="800.3" width="10" height="2" fill="#6ED0E0"/><text x="272.5" y="804.6" font-size="12" fill="#d8d9da" stroke="#d8d9da" stroke-width="0.25" textLength="75.3" lengthAdjust="spacingAndGlyphs">recv eno1.700</text><rect x="360.9" y="800.3" width="10" height="2" fill="#EF843C"/><text x="377.4" y="804.6" font-size="12" fill="#d8d9da" stroke="#d8d9da" stroke-width="0.25" textLength="74.7" lengthAdjust="spacingAndGlyphs">recv eno1.701</text><rect x="465.1" y="800.3" width="10" height="2" fill="#E24D42"/><text x="482.4" y="804.6" font-size="12" fill="#d8d9da" stroke="#d8d9da" stroke-width="0.25" textLength="51.7" lengthAdjust="spacingAndGlyphs">recv eno2</text><rect x="547.1" y="800.3" width="10" height="2" fill="#1F78C1"/><text x="563.6" y="804.6" font-size="12" fill="#d8d9da" stroke="#d8d9da" stroke-width="0.25" textLength="52.0" lengthAdjust="spacingAndGlyphs">recv eno3</text><rect x="628.4" y="800.3" width="10" height="2" fill="#BA43A9"/><text x="645.6" y="804.6" font-size="12" fill="#d8d9da" stroke="#d8d9da" stroke-width="0.25" textLength="51.8" lengthAdjust="spacingAndGlyphs">recv eno4</text><rect x="97.4" y="821.0" width="10" height="2" fill="#705DA0"/><text x="113.5" y="825.3" font-size="12" fill="#d8d9da" stroke="#d8d9da" stroke-width="0.25" textLength="49.1" lengthAdjust="spacingAndGlyphs">recv fcn0</text><rect x="175.8" y="821.0" width="10" height="2" fill="#508642"/><text x="192.5" y="825.3" font-size="12" fill="#d8d9da" stroke="#d8d9da" stroke-width="0.25" textLength="67.4" lengthAdjust="spacingAndGlyphs">recv hostdev</text><rect x="273.1" y="821.0" width="10" height="2" fill="#CCA300"/><text x="289.6" y="825.3" font-size="12" fill="#d8d9da" stroke="#d8d9da" stroke-width="0.25" textLength="93.4" lengthAdjust="spacingAndGlyphs">recv kvsenp5s0f0</text><rect x="396.1" y="821.0" width="10" height="2" fill="#447EBC"/><text x="412.2" y="825.3" font-size="12" fill="#d8d9da" stroke="#d8d9da" stroke-width="0.25" textLength="92.9" lengthAdjust="spacingAndGlyphs">recv kvsenp5s0f1</text><rect x="518.6" y="821.0" width="10" height="2" fill="#C15C17"/><text x="535.4" y="825.3" font-size="12" fill="#d8d9da" stroke="#d8d9da" stroke-width="0.25" textLength="35.3" lengthAdjust="spacingAndGlyphs">recv lo</text><rect x="584.2" y="821.0" width="10" height="2" fill="#890F02"/><text x="600.2" y="825.3" font-size="12" fill="#d8d9da" stroke="#d8d9da" stroke-width="0.25" textLength="63.9" lengthAdjust="spacingAndGlyphs">recv mgmt0</text><rect x="677.6" y="821.0" width="10" height="2" fill="#0A437C"/><text x="693.6" y="825.3" font-size="12" fill="#d8d9da" stroke="#d8d9da" stroke-width="0.25" textLength="51.2" lengthAdjust="spacingAndGlyphs">recv pcn0</text><rect x="97.4" y="841.7" width="10" height="2" fill="#6D1F62"/><text x="113.5" y="846.0" font-size="12" fill="#d8d9da" stroke="#d8d9da" stroke-width="0.25" textLength="54.8" lengthAdjust="spacingAndGlyphs">recv srvc0</text><rect x="181.0" y="841.7" width="10" height="2" fill="#584477"/><text x="197.5" y="846.0" font-size="12" fill="#d8d9da" stroke="#d8d9da" stroke-width="0.25" textLength="52.7" lengthAdjust="spacingAndGlyphs">trans cni0</text><rect x="263.4" y="841.7" width="10" height="2" fill="#B7DBAB"/><text x="279.9" y="846.0" font-size="12" fill="#d8d9da" stroke="#d8d9da" stroke-width="0.25" textLength="55.7" lengthAdjust="spacingAndGlyphs">trans eno1</text><rect x="348.7" y="841.7" width="10" height="2" fill="#F4D598"/><text x="365.7" y="846.0" font-size="12" fill="#d8d9da" stroke="#d8d9da" stroke-width="0.25" textLength="80.1" lengthAdjust="spacingAndGlyphs">trans eno1.700</text><rect x="459.3" y="841.7" width="10" height="2" fill="#70DBED"/><text x="475.3" y="846.0" font-size="12" fill="#d8d9da" stroke="#d8d9da" stroke-width="0.25" textLength="79.0" lengthAdjust="spacingAndGlyphs">trans eno1.701</text><rect x="567.8" y="841.7" width="10" height="2" fill="#F9BA8F"/><text x="585.1" y="846.0" font-size="12" fill="#d8d9da" stroke="#d8d9da" stroke-width="0.25" textLength="56.3" lengthAdjust="spacingAndGlyphs">trans eno2</text><rect x="656.1" y="841.7" width="10" height="2" fill="#F29191"/><text x="670.9" y="846.0" font-size="12" fill="#d8d9da" stroke="#d8d9da" stroke-width="0.25" textLength="56.8" lengthAdjust="spacingAndGlyphs">trans eno3</text><rect x="762.3" y="791" width="7.5" height="42" rx="3.7" fill="#35373d"/><text x="1058.6" y="627.5" font-size="14" fill="#d8d9da" font-weight="bold" textLength="143.2" lengthAdjust="spacingAndGlyphs">Disk Space Used Basic</text><rect x="831" y="654" width="635" height="1" fill="rgba(255,255,255,0.16)"/><rect x="831" y="680" width="635" height="1" fill="rgba(255,255,255,0.16)"/><rect x="831" y="707" width="635" height="1" fill="rgba(255,255,255,0.16)"/><rect x="831" y="734" width="635" height="1" fill="rgba(255,255,255,0.16)"/><rect x="831" y="761" width="635" height="1" fill="rgba(255,255,255,0.16)"/><rect x="869" y="654" width="1" height="107" fill="rgba(255,255,255,0.16)"/><rect x="975" y="654" width="1" height="107" fill="rgba(255,255,255,0.16)"/><rect x="1081" y="654" width="1" height="107" fill="rgba(255,255,255,0.16)"/><rect x="1186" y="654" width="1" height="107" fill="rgba(255,255,255,0.16)"/><rect x="1292" y="654" width="1" height="107" fill="rgba(255,255,255,0.16)"/><rect x="1398" y="654" width="1" height="107" fill="rgba(255,255,255,0.16)"/><text x="796.7" y="658.5" font-size="12" fill="#c7d0d9" stroke="#c7d0d9" stroke-width="0.2" textLength="28.8" lengthAdjust="spacingAndGlyphs">100%</text><text x="803.4" y="684.5" font-size="12" fill="#c7d0d9" stroke="#c7d0d9" stroke-width="0.2" textLength="22.1" lengthAdjust="spacingAndGlyphs">75%</text><text x="803.4" y="711.5" font-size="12" fill="#c7d0d9" stroke="#c7d0d9" stroke-width="0.2" textLength="22.1" lengthAdjust="spacingAndGlyphs">50%</text><text x="803.4" y="739.0" font-size="12" fill="#c7d0d9" stroke="#c7d0d9" stroke-width="0.2" textLength="22.1" lengthAdjust="spacingAndGlyphs">25%</text><text x="810.2" y="765.5" font-size="12" fill="#c7d0d9" stroke="#c7d0d9" stroke-width="0.2" textLength="15.3" lengthAdjust="spacingAndGlyphs">0%</text><text x="869.4" y="778.4" font-size="12" fill="#c7d0d9" stroke="#c7d0d9" stroke-width="0.2" text-anchor="middle">08:00</text><text x="975.2" y="778.4" font-size="12" fill="#c7d0d9" stroke="#c7d0d9" stroke-width="0.2" text-anchor="middle">10:00</text><text x="1081.0" y="778.4" font-size="12" fill="#c7d0d9" stroke="#c7d0d9" stroke-width="0.2" text-anchor="middle">12:00</text><text x="1186.8" y="778.4" font-size="12" fill="#c7d0d9" stroke="#c7d0d9" stroke-width="0.2" text-anchor="middle">14:00</text><text x="1292.6" y="778.4" font-size="12" fill="#c7d0d9" stroke="#c7d0d9" stroke-width="0.2" text-anchor="middle">16:00</text><text x="1398.4" y="778.4" font-size="12" fill="#c7d0d9" stroke="#c7d0d9" stroke-width="0.2" text-anchor="middle">18:00</text><rect x="1018" y="683" width="446.5" height="25" fill="#6b8a70"/><rect x="1018" y="708" width="446.5" height="20" fill="#7a9f80"/><rect x="1018" y="728.8" width="446.5" height="32.2" fill="#a99469"/><rect x="1018" y="682" width="446.5" height="1.5" fill="#6cc0cc"/><rect x="1018" y="727.6" width="446.5" height="1.4" fill="#e08540"/><rect x="1018" y="761" width="446.5" height="1.6" fill="#5a5a88"/><rect x="1081" y="682" width="1" height="79" fill="rgba(255,255,255,0.07)"/><rect x="1186" y="682" width="1" height="79" fill="rgba(255,255,255,0.07)"/><rect x="1292" y="682" width="1" height="79" fill="rgba(255,255,255,0.07)"/><rect x="1398" y="682" width="1" height="79" fill="rgba(255,255,255,0.07)"/><rect x="1018" y="707" width="446.5" height="1" fill="rgba(255,255,255,0.08)"/><rect x="809.2" y="800.3" width="10" height="2" fill="#7EB26D"/><text x="825.7" y="804.6" font-size="12" fill="#d8d9da" stroke="#d8d9da" stroke-width="0.25" textLength="35.7" lengthAdjust="spacingAndGlyphs">/home</text><rect x="874.0" y="800.3" width="10" height="2" fill="#EAB839"/><text x="890.4" y="804.6" font-size="12" fill="#d8d9da" stroke="#d8d9da" stroke-width="0.25" textLength="3.6" lengthAdjust="spacingAndGlyphs">/</text><rect x="908.9" y="800.3" width="10" height="2" fill="#6ED0E0"/><text x="925.4" y="804.6" font-size="12" fill="#d8d9da" stroke="#d8d9da" stroke-width="0.25" textLength="187.2" lengthAdjust="spacingAndGlyphs">/var/lib/containers/storage/overlay</text><rect x="1125.1" y="800.3" width="10" height="2" fill="#EF843C"/><text x="1141.6" y="804.6" font-size="12" fill="#d8d9da" stroke="#d8d9da" stroke-width="0.25" textLength="29.8" lengthAdjust="spacingAndGlyphs">/boot</text><defs><clipPath id="dlc"><rect x="800" y="800" width="682" height="60"/></clipPath></defs><g clip-path="url(#dlc)"><rect x="809.2" y="821" width="10" height="2" fill="#E24D42"/><text x="825.7" y="825.3" font-size="12" fill="#d8d9da" stroke="#d8d9da" stroke-width="0.25" textLength="660.8" lengthAdjust="spacingAndGlyphs">/var/lib/containers/storage/overlay-containers/11def2bb67e72285875c2045963031b4e690ebef31c29e9b08c7e52c9eadc8</text><rect x="809.2" y="841.7" width="10" height="2" fill="#1F78C1"/><text x="825.7" y="846.0" font-size="12" fill="#d8d9da" stroke="#d8d9da" stroke-width="0.25" textLength="656.8" lengthAdjust="spacingAndGlyphs">/var/lib/containers/storage/overlay-containers/56965fdbb1681669862d17d947cb0f26dd7e62cf6401b4d29666fda46946509</text></g><rect x="1474.2" y="791" width="7.2" height="30" rx="3.6" fill="#35373d"/><path d="M76.0 153 H104.0 L76.0 181 Z" fill="#212328"/><g fill="#8d8f93"><rect x="82.2" y="157.7" width="2.8" height="2"/><rect x="82.5" y="161.0" width="2.4" height="5"/><rect x="81.7" y="164.8" width="4.2" height="1.3"/><rect x="81.7" y="161.0" width="1.5" height="1.1"/></g><path d="M254.0 153 H282.0 L254.0 181 Z" fill="#212328"/><g fill="#8d8f93"><rect x="260.2" y="157.7" width="2.8" height="2"/><rect x="260.5" y="161.0" width="2.4" height="5"/><rect x="259.7" y="164.8" width="4.2" height="1.3"/><rect x="259.7" y="161.0" width="1.5" height="1.1"/></g><path d="M432.0 153 H460.0 L432.0 181 Z" fill="#212328"/><g fill="#8d8f93"><rect x="438.2" y="157.7" width="2.8" height="2"/><rect x="438.5" y="161.0" width="2.4" height="5"/><rect x="437.7" y="164.8" width="4.2" height="1.3"/><rect x="437.7" y="161.0" width="1.5" height="1.1"/></g><path d="M610.0 153 H638.0 L610.0 181 Z" fill="#212328"/><g fill="#8d8f93"><rect x="616.2" y="157.7" width="2.8" height="2"/><rect x="616.5" y="161.0" width="2.4" height="5"/><rect x="615.7" y="164.8" width="4.2" height="1.3"/><rect x="615.7" y="161.0" width="1.5" height="1.1"/></g><path d="M788.0 153 H816.0 L788.0 181 Z" fill="#212328"/><g fill="#8d8f93"><rect x="794.2" y="157.7" width="2.8" height="2"/><rect x="794.5" y="161.0" width="2.4" height="5"/><rect x="793.7" y="164.8" width="4.2" height="1.3"/><rect x="793.7" y="161.0" width="1.5" height="1.1"/></g><path d="M966.0 153 H994.0 L966.0 181 Z" fill="#212328"/><g fill="#8d8f93"><rect x="972.2" y="157.7" width="2.8" height="2"/><rect x="972.5" y="161.0" width="2.4" height="5"/><rect x="971.7" y="164.8" width="4.2" height="1.3"/><rect x="971.7" y="161.0" width="1.5" height="1.1"/></g><path d="M1144.0 153 H1172.0 L1144.0 181 Z" fill="#212328"/><g fill="#8d8f93"><rect x="1150.2" y="157.7" width="2.8" height="2"/><rect x="1150.5" y="161.0" width="2.4" height="5"/><rect x="1149.7" y="164.8" width="4.2" height="1.3"/><rect x="1149.7" y="161.0" width="1.5" height="1.1"/></g><path d="M1262.6666666666667 153 H1290.6666666666667 L1262.6666666666667 181 Z" fill="#212328"/><g fill="#8d8f93"><rect x="1268.9" y="157.7" width="2.8" height="2"/><rect x="1269.2" y="161.0" width="2.4" height="5"/><rect x="1268.4" y="164.8" width="4.2" height="1.3"/><rect x="1268.4" y="161.0" width="1.5" height="1.1"/></g><path d="M1144.0 229 H1172.0 L1144.0 257 Z" fill="#212328"/><g fill="#8d8f93"><rect x="1150.2" y="233.7" width="2.8" height="2"/><rect x="1150.5" y="237.0" width="2.4" height="5"/><rect x="1149.7" y="240.8" width="4.2" height="1.3"/><rect x="1149.7" y="237.0" width="1.5" height="1.1"/></g><path d="M1262.6666666666667 229 H1290.6666666666667 L1262.6666666666667 257 Z" fill="#212328"/><g fill="#8d8f93"><rect x="1268.9" y="233.7" width="2.8" height="2"/><rect x="1269.2" y="237.0" width="2.4" height="5"/><rect x="1268.4" y="240.8" width="4.2" height="1.3"/><rect x="1268.4" y="237.0" width="1.5" height="1.1"/></g><path d="M1381.3333333333335 229 H1409.3333333333335 L1381.3333333333335 257 Z" fill="#212328"/><g fill="#8d8f93"><rect x="1387.5" y="233.7" width="2.8" height="2"/><rect x="1387.8" y="237.0" width="2.4" height="5"/><rect x="1387.0" y="240.8" width="4.2" height="1.3"/><rect x="1387.0" y="237.0" width="1.5" height="1.1"/></g><path d="M76 343 H104 L76 371 Z" fill="#212328"/><g fill="#8d8f93"><rect x="82.2" y="347.7" width="2.8" height="2"/><rect x="82.5" y="351.0" width="2.4" height="5"/><rect x="81.7" y="354.8" width="4.2" height="1.3"/><rect x="81.7" y="351.0" width="1.5" height="1.1"/></g><path d="M788 343 H816 L788 371 Z" fill="#212328"/><g fill="#8d8f93"><rect x="794.2" y="347.7" width="2.8" height="2"/><rect x="794.5" y="351.0" width="2.4" height="5"/><rect x="793.7" y="354.8" width="4.2" height="1.3"/><rect x="793.7" y="351.0" width="1.5" height="1.1"/></g><path d="M76 609 H104 L76 637 Z" fill="#212328"/><g fill="#8d8f93"><rect x="82.2" y="613.7" width="2.8" height="2"/><rect x="82.5" y="617.0" width="2.4" height="5"/><rect x="81.7" y="620.8" width="4.2" height="1.3"/><rect x="81.7" y="617.0" width="1.5" height="1.1"/></g><path d="M788 609 H816 L788 637 Z" fill="#212328"/><g fill="#8d8f93"><rect x="794.2" y="613.7" width="2.8" height="2"/><rect x="794.5" y="617.0" width="2.4" height="5"/><rect x="793.7" y="620.8" width="4.2" height="1.3"/><rect x="793.7" y="617.0" width="1.5" height="1.1"/></g><rect x="292.5" y="117" width="173.5" height="149" rx="2" fill="#141619" stroke="#202226" stroke-width="1"/><rect x="293" y="230" width="172.5" height="28" fill="#202226"/><text x="300.7" y="137.8" font-size="14" fill="#d8d9da" stroke="#d8d9da" stroke-width="0.25" textLength="137.5" lengthAdjust="spacingAndGlyphs">docs.sp.lab.kaloom.io</text><text x="300.7" y="165.7" font-size="14" fill="#d8d9da" stroke="#d8d9da" stroke-width="0.25" textLength="97.7" lengthAdjust="spacingAndGlyphs">ts25 controller1</text><text x="300.7" y="193.6" font-size="14" fill="#d8d9da" stroke="#d8d9da" stroke-width="0.25" textLength="98.7" lengthAdjust="spacingAndGlyphs">ts25 controller2</text><text x="300.7" y="221.5" font-size="14" fill="#d8d9da" stroke="#d8d9da" stroke-width="0.25" textLength="98.7" lengthAdjust="spacingAndGlyphs">ts25 controller3</text><text x="300.7" y="249.4" font-size="14" fill="#d8d9da" stroke="#d8d9da" stroke-width="0.25" textLength="53.8" lengthAdjust="spacingAndGlyphs">ts25 vim</text><rect x="1498.8" y="56" width="8" height="496" rx="3.8" fill="#3b3d44"/></svg>

</body></html>
